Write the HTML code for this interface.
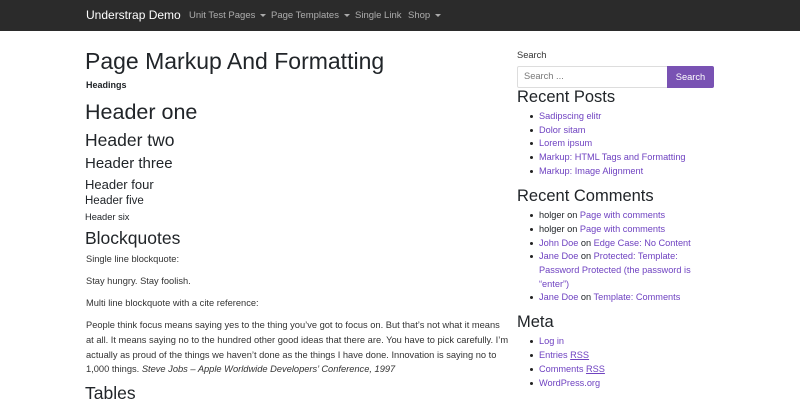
<!DOCTYPE html>
<html><head><meta charset="utf-8"><style>
*{margin:0;padding:0;box-sizing:border-box}
body{width:800px;height:400px;overflow:hidden;background:#fff;font-family:"Liberation Sans",sans-serif;color:#212529;position:relative}
.a{position:absolute;white-space:nowrap;line-height:1}
nav{position:absolute;left:0;top:0;width:800px;height:31px;background:#2b2b2b}
.nl{color:rgba(255,255,255,.6);font-size:9.5px;top:11px}
.car{display:inline-block;border-left:3px solid transparent;border-right:3px solid transparent;border-top:3px solid rgba(255,255,255,.6);vertical-align:middle;margin-left:5px}
.p{font-size:9.3px;color:#333}
a,.lk{color:#6f42c1;text-decoration:none}
.li{font-size:9.2px;left:539px}
.li:before{content:"";position:absolute;left:-9px;top:3px;width:3px;height:3px;border-radius:50%;background:#222}
</style></head><body>
<nav></nav>
<div class="a" style="left:86px;top:9px;font-size:12px;color:#fff">Understrap Demo</div>
<div class="a nl" style="left:189px">Unit Test Pages<span class="car"></span></div>
<div class="a nl" style="left:271px">Page Templates<span class="car"></span></div>
<div class="a nl" style="left:355px">Single Link</div>
<div class="a nl" style="left:408px">Shop<span class="car"></span></div>

<div class="a" style="left:85px;top:50px;font-size:23px">Page Markup And Formatting</div>
<div class="a" style="left:86px;top:81px;font-size:9px;font-weight:bold">Headings</div>
<div class="a" style="left:85px;top:102px;font-size:21.5px">Header one</div>
<div class="a" style="left:85px;top:132px;font-size:17.5px">Header two</div>
<div class="a" style="left:85px;top:156px;font-size:15px">Header three</div>
<div class="a" style="left:85px;top:178px;font-size:13px">Header four</div>
<div class="a" style="left:85px;top:196px;font-size:11.5px">Header five</div>
<div class="a" style="left:85px;top:213px;font-size:9.3px">Header six</div>
<div class="a" style="left:85px;top:230px;font-size:17.5px">Blockquotes</div>
<div class="a p" style="left:86px;top:255px">Single line blockquote:</div>
<div class="a p" style="left:86px;top:277px">Stay hungry. Stay foolish.</div>
<div class="a p" style="left:86px;top:299px">Multi line blockquote with a cite reference:</div>
<div class="a p" style="left:86px;top:321px">People think focus means saying yes to the thing you’ve got to focus on. But that’s not what it means</div>
<div class="a p" style="left:86px;top:336px">at all. It means saying no to the hundred other good ideas that there are. You have to pick carefully. I’m</div>
<div class="a p" style="left:86px;top:351px">actually as proud of the things we haven’t done as the things I have done. Innovation is saying no to</div>
<div class="a p" style="left:86px;top:365px">1,000 things. <i>Steve Jobs – Apple Worldwide Developers’ Conference, 1997</i></div>
<div class="a" style="left:85px;top:385px;font-size:17.5px">Tables</div>

<div class="a p" style="left:517px;top:51px">Search</div>
<div style="position:absolute;left:517px;top:66px;width:151px;height:22px;border:1px solid #ddd;border-radius:2px 0 0 2px"></div>
<div class="a" style="left:524px;top:72px;font-size:9.3px;color:#777">Search ...</div>
<div style="position:absolute;left:667px;top:66px;width:47px;height:22px;background:#7952b3;border-radius:0 2px 2px 0;color:#fff;font-size:9.3px;text-align:center;line-height:22px">Search</div>
<div class="a" style="left:517px;top:89px;font-size:16.5px">Recent Posts</div>
<div class="a li lk" style="top:112px">Sadipscing elitr</div>
<div class="a li lk" style="top:126px">Dolor sitam</div>
<div class="a li lk" style="top:139px">Lorem ipsum</div>
<div class="a li lk" style="top:153px">Markup: HTML Tags and Formatting</div>
<div class="a li lk" style="top:167px">Markup: Image Alignment</div>
<div class="a" style="left:517px;top:188px;font-size:16.5px">Recent Comments</div>
<div class="a li" style="top:211px">holger on <a>Page with comments</a></div>
<div class="a li" style="top:225px">holger on <a>Page with comments</a></div>
<div class="a li" style="top:239px"><a>John Doe</a> on <a>Edge Case: No Content</a></div>
<div class="a li" style="top:252px"><a>Jane Doe</a> on <a>Protected: Template:</a></div>
<div class="a lk" style="left:539px;top:266px;font-size:9.2px">Password Protected (the password is</div>
<div class="a lk" style="left:539px;top:280px;font-size:9.2px">“enter”)</div>
<div class="a li" style="top:293px"><a>Jane Doe</a> on <a>Template: Comments</a></div>
<div class="a" style="left:517px;top:314px;font-size:16.5px">Meta</div>
<div class="a li lk" style="top:337px">Log in</div>
<div class="a li lk" style="top:351px">Entries <u>RSS</u></div>
<div class="a li lk" style="top:365px">Comments <u>RSS</u></div>
<div class="a li lk" style="top:379px">WordPress.org</div>
</body></html>
